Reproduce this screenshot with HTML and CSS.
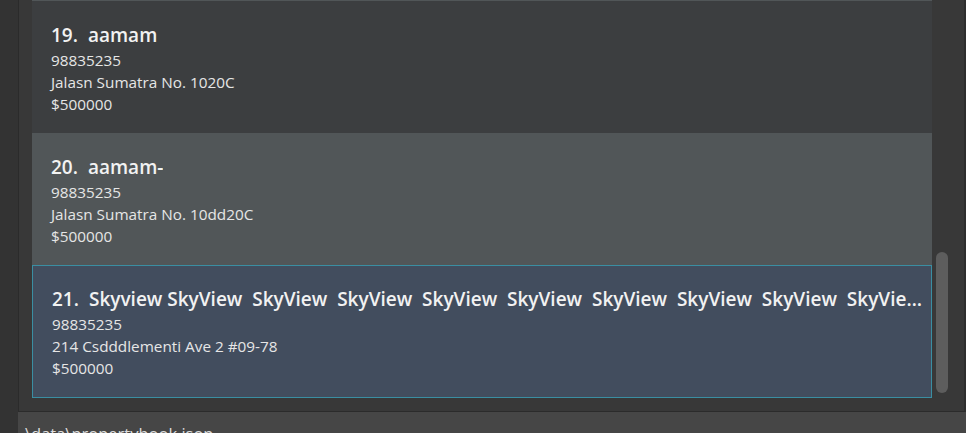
FILE: index.html
```html
<!DOCTYPE html>
<html>
<head>
<meta charset="utf-8">
<link rel="stylesheet" href="styles.css">
</head>
<body>
<div class="app">
  <div class="gutter"></div>
  <div class="main">
    <div class="list-panel">
      <div class="list">
        <div class="card card-light card-peek"></div>
        <div class="card card-dark">
          <div class="title"><span class="idx">19.</span><span class="name">aamam</span></div>
          <div class="line">98835235</div>
          <div class="line">Jalasn Sumatra No. 1020C</div>
          <div class="line">$500000</div>
        </div>
        <div class="card card-light">
          <div class="title"><span class="idx">20.</span><span class="name">aamam-</span></div>
          <div class="line">98835235</div>
          <div class="line">Jalasn Sumatra No. 10dd20C</div>
          <div class="line">$500000</div>
        </div>
        <div class="card card-selected">
          <div class="title"><span class="idx">21.</span><span class="name">Skyview SkyView&nbsp; SkyView&nbsp; SkyView&nbsp; SkyView&nbsp; SkyView&nbsp; SkyView&nbsp; SkyView&nbsp; SkyView&nbsp; SkyView&nbsp; SkyView</span></div>
          <div class="line">98835235</div>
          <div class="line">214 Csdddlementi Ave 2 #09-78</div>
          <div class="line">$500000</div>
        </div>
      </div>
      <div class="scrollbar">
        <div class="thumb" style="margin-top:252px"></div>
      </div>
    </div>
    <div class="status">\data\propertybook.json</div>
  </div>
</div>
</body>
</html>
```
FILE: styles.css
```css
* { box-sizing: border-box; }
html, body {
  margin: 0;
  padding: 0;
  width: 966px;
  height: 433px;
  overflow: hidden;
  background: #333333;
  font-family: "Open Sans", "Noto Sans", sans-serif;
}
.app {
  display: flex;
  height: 433px;
}
.gutter {
  width: 18px;
  flex: none;
  background: #333333;
}
.main {
  flex: 1;
  display: flex;
  flex-direction: column;
  min-width: 0;
}
.list-panel {
  height: 412px;
  flex: none;
  display: flex;
  background: #383838;
  border-left: 1px solid #2b2b2b;
  border-right: 2px solid #2e2e2e;
  border-bottom: 1px solid #2b2b2b;
  padding-left: 13px;
  overflow: hidden;
}
.list {
  width: 900px;
  flex: none;
  display: flex;
  flex-direction: column;
}
.card {
  height: 132px;
  flex: none;
  padding: 21px 19px 0;
  color: #eeeeee;
}
.card-peek { height: 1px; padding: 0; }
.card-dark { background: #3c3e40; }
.card-light { background: #515658; }
.card-selected {
  height: 133px;
  background: #424d5e;
  border: 1px solid #3a8ea2;
  padding: 20px 6px 0 19px;
}
.title {
  display: flex;
  gap: 10px;
  font-size: 19px;
  font-weight: 600;
  line-height: 26px;
  height: 26px;
  margin-bottom: 1px;
  white-space: nowrap;
  color: #f2f2f2;
}
.idx { flex: none; }
.name {
  overflow: hidden;
  text-overflow: ellipsis;
  min-width: 0;
}
.line {
  font-size: 15.3px;
  line-height: 22px;
  color: #e6e6e6;
}
.scrollbar {
  flex: 1;
  display: flex;
  flex-direction: column;
  align-items: flex-start;
  padding-left: 4px;
}
.thumb {
  width: 12px;
  height: 141px;
  border-radius: 6px;
  background: #5d5d5d;
}
.status {
  flex: 1;
  background: #464646;
  color: #dddddd;
  font-size: 16.5px;
  padding: 10px 0 0 7px;
  line-height: 24px;
  white-space: nowrap;
  overflow: hidden;
}
```
